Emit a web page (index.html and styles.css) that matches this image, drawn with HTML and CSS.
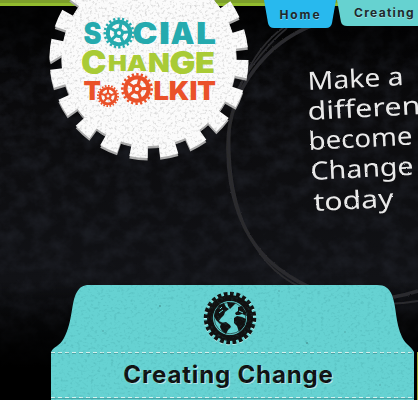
FILE: index.html
```html
<!DOCTYPE html>
<html lang="en">
<head>
<meta charset="utf-8">
<title>Social Change Toolkit</title>
<link rel="stylesheet" href="styles.css">
</head>
<body>
<svg class="board" viewBox="0 0 418 400" aria-hidden="true">
  <defs>
    <filter id="dust" x="0" y="0" width="100%" height="100%" color-interpolation-filters="sRGB">
      <feTurbulence type="fractalNoise" baseFrequency=".06 .07" numOctaves="5" seed="8"/>
      <feColorMatrix values="0 0 0 0 .13  0 0 0 0 .14  0 0 0 0 .17  2 0 0 0 -.7"/>
    </filter>
    <filter id="chalk" filterUnits="userSpaceOnUse" x="0" y="0" width="418" height="400">
      <feTurbulence type="fractalNoise" baseFrequency=".5" numOctaves="2" seed="3" result="n"/>
      <feDisplacementMap in="SourceGraphic" in2="n" scale="2" xChannelSelector="R" yChannelSelector="G"/>
    </filter>
    <linearGradient id="shade" x2="0" y2="1">
      <stop offset="0" stop-color="#000" stop-opacity=".9"/>
      <stop offset=".2" stop-color="#000" stop-opacity="0"/>
      <stop offset=".7" stop-color="#000" stop-opacity="0"/>
      <stop offset=".92" stop-color="#000"/>
    </linearGradient>
    <linearGradient id="glow" x2="0" y2="1">
      <stop offset="0" stop-color="#030304"/><stop offset=".3" stop-color="#0b0b0d"/><stop offset=".7" stop-color="#111216"/><stop offset=".95" stop-color="#000"/>
    </linearGradient>
  </defs>
  <rect width="418" height="400" fill="url(#glow)"/>
  <rect width="418" height="400" filter="url(#dust)" opacity=".6"/>
  <rect width="418" height="400" fill="url(#shade)"/>
  <g fill="none" stroke="#2a2a2d" filter="url(#chalk)">
    <path stroke-width="3.500" d="M311 26C268 43 229 88 228 144C227 190 240 240 279 269C318 298 365 308 418 291"/>
    <path stroke-width="1.800" d="M284 27C252 50 226 101 228 158M287 28C262 49 239 82 235 97M230 125C226 200 249 263 300 287C340 305 385 307 418 301"/>
  </g>
</svg>

<header class="top">
  <div class="logo">
    <svg viewBox="0 0 208 166" role="img" aria-label="Social Change Toolkit">
      <defs>
        <filter id="paper" filterUnits="userSpaceOnUse" x="0" y="-45" width="208" height="211" color-interpolation-filters="sRGB">
          <feTurbulence type="fractalNoise" baseFrequency=".4" numOctaves="2" seed="5" result="n"/>
          <feColorMatrix in="n" values="0 0 0 0 .5  0 0 0 0 .5  0 0 0 0 .5  .9 0 0 0 -.46" result="d"/>
          <feComposite in="d" in2="SourceGraphic" operator="in" result="grain"/>
          <feMerge><feMergeNode in="SourceGraphic"/><feMergeNode in="grain"/></feMerge>
        </filter>
        <g id="seal">
          <circle cx="104" cy="58.500" r="87"/>
          <circle cx="104" cy="58.500" r="91" fill="none" stroke-width="17" pathLength="200" stroke-dasharray="5.900 4.100" transform="rotate(.8 104 58.500)"/>
        </g>
        <g id="cog" fill="none" stroke="currentColor">
          <circle r="11.200" stroke-width="4"/>
          <circle r="14.200" stroke-width="2.600" pathLength="200" stroke-dasharray="5 5"/>
          <circle r="3.500" stroke-width="3"/>
          <path stroke-width="3" d="M0-4V-11M3.800-1.200L10.500-3.400M2.400 3.200L6.500 8.900M-2.400 3.200L-6.500 8.900M-3.800-1.200L-10.500-3.400"/>
        </g>
      </defs>
      <use href="#seal" y="2.500" fill="#aaa" stroke="#aaa"/>
      <use href="#seal" fill="#fbfbfb" stroke="#fbfbfb" filter="url(#paper)"/>
      <g class="word teal">
        <text x="38.500" y="44.300" font-size="29.500" textLength="18" lengthAdjust="spacingAndGlyphs">S</text>
        <text x="87.500" y="44.300" font-size="29.500" textLength="25" lengthAdjust="spacingAndGlyphs">C</text>
        <text x="114" y="44.300" font-size="29.500" textLength="11" lengthAdjust="spacingAndGlyphs">I</text>
        <text x="125.500" y="44.300" font-size="29.500" textLength="24" lengthAdjust="spacingAndGlyphs">A</text>
        <text x="151" y="44.300" font-size="29.500" textLength="20" lengthAdjust="spacingAndGlyphs">L</text>
        <use href="#cog" transform="translate(74 33) rotate(12)"/>
      </g>
      <g class="word lime">
        <text x="36" y="74" font-size="32.500" textLength="25.500" lengthAdjust="spacingAndGlyphs">C</text>
        <text x="63" y="71" font-size="21.500" textLength="39" lengthAdjust="spacingAndGlyphs">HA</text>
        <text x="103" y="71.500" font-size="25.500" textLength="22" lengthAdjust="spacingAndGlyphs">N</text>
        <text x="124.500" y="74" font-size="32" textLength="26" lengthAdjust="spacingAndGlyphs">G</text>
        <text x="150" y="72.500" font-size="28.500" textLength="20" lengthAdjust="spacingAndGlyphs">E</text>
      </g>
      <g class="word red">
        <text x="38.500" y="100.300" font-size="26" textLength="17.500" lengthAdjust="spacingAndGlyphs">T</text>
        <text x="108.500" y="100.300" font-size="26" textLength="62.500" lengthAdjust="spacingAndGlyphs">LKIT</text>
        <use href="#cog" transform="translate(63 96) scale(.71)"/>
        <use href="#cog" transform="translate(92 89) rotate(15) scale(1.030)"/>
      </g>
    </svg>
  </div>
  <nav class="tabs">
    <a class="tab home">Home</a>
    <a class="tab creating">Creating</a>
  </nav>
</header>

<section class="message">
  <svg viewBox="0 0 118 170">
    <g filter="url(#chalk)">
      <text transform="translate(8 32) rotate(-3)" textLength="96" lengthAdjust="spacingAndGlyphs">Make a</text>
      <text transform="translate(8 62) rotate(-3)" textLength="113" lengthAdjust="spacingAndGlyphs">differen</text>
      <text transform="translate(9 92) rotate(-3)" textLength="104" lengthAdjust="spacingAndGlyphs">become</text>
      <text transform="translate(11 122) rotate(-3)" textLength="103" lengthAdjust="spacingAndGlyphs">Change</text>
      <text transform="translate(14 153) rotate(-3)" textLength="80" lengthAdjust="spacingAndGlyphs">today</text>
    </g>
  </svg>
</section>

<main class="shelf">
  <article class="folder">
    <svg class="flap" viewBox="0 0 363 67" aria-hidden="true">
      <path fill="#66d2d2" d="M0 67C3 61 8 62 13 53C22 37 20 16 26 7C29 2 32 0 38 0H326C334 0 338 3 341 10C346 24 344 37 351 52C355 60 360 61 363 67Z"/>
      <g transform="translate(179 33)">
        <circle cy="1" r="24.700" fill="none" stroke="#baf0ef" stroke-width="3" pathLength="240" stroke-dasharray="6 4"/>
        <circle r="23" fill="#111"/>
        <circle r="24" fill="none" stroke="#111" stroke-width="4.500" pathLength="240" stroke-dasharray="6 4"/>
        <circle r="17" fill="#66d2d2"/>
        <circle r="15.800" fill="#66d2d2" stroke="#111" stroke-width=".6"/>
        <g fill="#111">
          <path d="M-15-7L-11-13L-6-15L-4-11L-1-9L-5-6L-6-3L-9 0L-11 3L-7 5L-10 6L-14 2L-16-2Z"/>
          <path d="M-3-16L6-15L3-12L0-9L-2-12Z"/>
          <path d="M-9 5L-4 4L0 7L1 9L-2 12L-4 16L-8 13L-10 9Z"/>
          <path d="M4 0L7-2L12-1L16 1L15 7L12 11L9 14L7 8L4 5Z"/>
          <path d="M5-5L8-7L8-11L12-12L16-6L17-2L12-4L9-3L6-3Z"/>
        </g>
        <path fill="none" stroke="#66d2d2" d="M-10-9L-8-11M-11-5L-7-8M9-7L13-5"/>
      </g>
    </svg>
    <h2 class="title">Creating Change</h2>
  </article>
  <div class="next"></div>
</main>
<svg class="grain" viewBox="0 0 363 115" aria-hidden="true">
  <defs>
    <filter id="speck" x="0" y="0" width="100%" height="100%" color-interpolation-filters="sRGB">
      <feTurbulence type="fractalNoise" baseFrequency=".3 .4" numOctaves="2" seed="9" result="n"/>
      <feColorMatrix in="n" values="0 0 0 0 .2  0 0 0 0 .55  0 0 0 0 .56  1.200 0 0 0 -.62" result="d"/>
      <feComposite in="d" in2="SourceGraphic" operator="in"/>
    </filter>
  </defs>
  <path filter="url(#speck)" d="M0 115V67C3 61 8 62 13 53C22 37 20 16 26 7C29 2 32 0 38 0H326C334 0 338 3 341 10C346 24 344 37 351 52C355 60 360 61 363 67V115Z"/>
  <g fill="#39797a"><circle cx="109" cy="21" r=".9"/><circle cx="14" cy="58" r=".8"/><circle cx="52" cy="46" r=".7"/><circle cx="256" cy="58" r="1"/><circle cx="228" cy="6" r=".7"/><circle cx="294" cy="47" r=".7"/><circle cx="329" cy="100" r=".7"/></g>
</svg>
</body>
</html>
```
FILE: styles.css
```css
* { box-sizing: border-box; }

body {
  margin: 0;
  width: 418px;
  height: 400px;
  overflow: hidden;
  position: relative;
  background: #050506;
  font-family: Inter, "Noto Sans", sans-serif;
}

svg { display: block; }

.board {
  position: absolute;
  inset: 0;
  z-index: -1;
  width: 418px;
  height: 400px;
}

.top {
  display: flex;
  height: 6px;
  padding-left: 45px;
  background: linear-gradient(#7d9f2b 0 3px, #91bb2d 3px);
}

.logo { width: 208px; height: 166px; flex: none; }
.logo svg { width: 208px; height: 166px; }

.word { font-family: Inter, sans-serif; font-weight: 900; }
.teal { color: #25aaae; fill: #25aaae; }
.lime { color: #a9cb36; fill: #a9cb36; }
.red { color: #ea5129; fill: #ea5129; }

.tabs {
  display: flex;
  flex: none;
  align-items: flex-start;
  margin-left: 11px;
  gap: 1px;
}

.tab {
  color: #20292b;
  font-size: 12px;
  font-weight: 700;
  letter-spacing: 1.3px;
  text-shadow: 0 1px rgba(255, 255, 255, .35);
  white-space: nowrap;
}

.home {
  width: 72px;
  height: 28px;
  padding: 7px 0 0 15.5px;
  background: #28b9ee;
  letter-spacing: 1.9px;
  clip-path: path("M0 0H72L68 23Q67 28 62 28H10Q5 28 4 23Z");
}

.creating {
  width: 100px;
  height: 26px;
  padding: 5px 0 0 17px;
  background: #66d2d0;
  clip-path: path("M0 0H100V26H10Q5 26 4 22Z");
}

.message {
  width: 118px;
  height: 170px;
  margin: 52px 0 0 300px;
}

.message svg { width: 118px; height: 170px; overflow: hidden; }

.message text {
  fill: #e9e9e9;
  font-family: "Noto Sans", sans-serif;
  font-size: 25px;
  font-weight: 400;
}

.shelf {
  display: flex;
  gap: 3px;
  margin: 57px 0 0 51px;
}

.folder { width: 363px; height: 115px; flex: none; }
.flap { width: 363px; height: 67px; }

.title {
  height: 48px;
  margin: 0;
  padding-top: 8px;
  color: #111;
  background:
    repeating-linear-gradient(90deg, #d5f2ef 0 4px, transparent 4px 7px) 0 0 / 100% 1px no-repeat,
    repeating-linear-gradient(90deg, #4da9aa 0 4px, transparent 4px 7px) 0 1px / 100% 1px no-repeat,
    repeating-linear-gradient(90deg, #d5f2ef 0 4px, transparent 4px 7px) 0 45px / 100% 1px no-repeat,
    linear-gradient(#48a5a7, #48a5a7) 0 46px / 100% 1px no-repeat,
    #66d2d2;
  font-size: 24px;
  font-weight: 700;
  line-height: 30px;
  letter-spacing: .85px;
  text-align: center;
  text-indent: -8px;
  text-shadow: 1px 1px rgba(255, 255, 255, .55);
}

.next { width: 1px; height: 48px; margin-top: 67px; background: #a2ae39; }

.grain {
  position: absolute;
  left: 51px;
  top: 285px;
  width: 363px;
  height: 115px;
  opacity: .6;
  pointer-events: none;
}
```
